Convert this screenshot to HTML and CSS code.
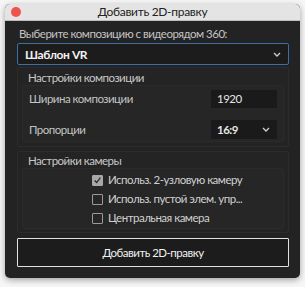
FILE: index.html
```html
<!DOCTYPE html>
<html lang="ru">
<head>
<meta charset="utf-8">
<link rel="stylesheet" href="styles.css">
</head>
<body>
<div class="window">
  <div class="titlebar">
    <span class="close"></span>
    <span class="title">Добавить 2D-правку</span>
  </div>
  <div class="content">
    <div class="label">Выберите композицию с видеорядом 360:</div>
    <div class="select main">
      <span>Шаблон VR</span>
      <svg class="chev" width="8" height="5" viewBox="0 0 8 5"><path d="M1 1 L4 4 L7 1" fill="none" stroke="#cfcfcf" stroke-width="1.3"/></svg>
    </div>
    <div class="group g1">
      <div class="glabel">Настройки композиции</div>
      <div class="panel">
        <div class="row">
          <span>Ширина композиции</span>
          <div class="field">1920</div>
        </div>
        <div class="row">
          <span>Пропорции</span>
          <div class="field sel"><span>16:9</span>
            <svg class="chev" width="8" height="5" viewBox="0 0 8 5"><path d="M1 1 L4 4 L7 1" fill="none" stroke="#cfcfcf" stroke-width="1.3"/></svg>
          </div>
        </div>
      </div>
    </div>
    <div class="group g2">
      <div class="glabel">Настройки камеры</div>
      <div class="panel checks">
        <div class="check"><span class="box on"><svg width="11" height="11" viewBox="0 0 11 11"><path d="M2 5.5 L4.5 8 L9 2" fill="none" stroke="#2a2a2a" stroke-width="1.6"/></svg></span>Использ. 2-узловую камеру</div>
        <div class="check"><span class="box"></span>Использ. пустой элем. упр...</div>
        <div class="check"><span class="box"></span>Центральная камера</div>
      </div>
    </div>
    <div class="button">Добавить 2D-правку</div>
  </div>
</div>
</body>
</html>
```

FILE: styles.css
```css
html, body {
  margin: 0;
  padding: 0;
  background: #f6f6f6;
  width: 305px;
  height: 287px;
  overflow: hidden;
  font-family: "Lato", "Open Sans", sans-serif;
}
.window {
  margin: 4px 5px 0 5px;
  width: 295px;
  height: 274px;
  border-radius: 5px;
  overflow: hidden;
  background: #232323;
  box-shadow: 0 2px 6px rgba(0,0,0,0.35);
  display: flex;
  flex-direction: column;
}
.titlebar {
  height: 16px;
  flex: none;
  background: #e4e4e4;
  display: flex;
  align-items: center;
  justify-content: center;
  position: relative;
  border-bottom: 1px solid #bdbdbd;
}
.close {
  position: absolute;
  left: 6px;
  top: 3px;
  width: 10px;
  height: 10px;
  border-radius: 50%;
  background: #f0524f;
}
.title {
  font-size: 12px;
  letter-spacing: -0.3px;
  color: #222;
  line-height: 16px;
}
.content {
  padding: 6px 11px 0 12px;
  display: flex;
  flex-direction: column;
  color: #c4c4c4;
  font-size: 11.5px;
  letter-spacing: -0.5px;
}
.label {
  height: 14px;
  line-height: 14px;
  padding-left: 2px;
}
.select.main {
  margin-top: 2px;
  height: 20px;
  border: 1px solid #3d6ea6;
  border-radius: 2px;
  background: #1c1c1c;
  display: flex;
  align-items: center;
  justify-content: space-between;
  padding: 0 7px 0 7px;
  color: #f2f2f2;
  font-weight: 700;
  font-size: 12px;
  letter-spacing: -0.4px;
}
.group {
  border: 1px solid #2c2c2c;
  border-radius: 2px;
  background: #242424;
}
.g1 {
  margin-top: 2px;
  padding: 3px 4px 4px 4px;
}
.g2 {
  margin-top: 4px;
  padding: 2px 4px 3px 4px;
}
.glabel {
  height: 14px;
  line-height: 14px;
  padding-left: 6px;
  color: #c8c8c8;
}
.panel {
  border: 1px solid #2b2b2b;
  border-radius: 2px;
  background: #262626;
}
.g1 .panel {
  padding: 3px 6px 2px 6px;
  display: flex;
  flex-direction: column;
  gap: 12px;
}
.row {
  display: flex;
  justify-content: space-between;
  align-items: center;
  height: 19px;
}
.field {
  width: 66px;
  height: 18px;
  background: #1a1a1a;
  color: #e6e6e6;
  font-size: 11.5px;
  line-height: 18px;
  padding: 0 0 0 6px;
  box-sizing: border-box;
}
.field.sel {
  height: 19px;
  display: flex;
  align-items: center;
  justify-content: space-between;
  padding-right: 7px;
  font-weight: 700;
}
.checks {
  padding: 4px 0 3px 69px;
  display: flex;
  flex-direction: column;
  gap: 5px;
}
.check {
  display: flex;
  align-items: center;
  gap: 5px;
  height: 14px;
  line-height: 14px;
  color: #d0d0d0;
}
.box {
  width: 11px;
  height: 11px;
  border: 1px solid #9a9a9a;
  border-radius: 1px;
  box-sizing: border-box;
  display: flex;
  align-items: center;
  justify-content: center;
}
.box.on {
  background: #a8a8a8;
  border-color: #a8a8a8;
}
.box svg { display: block; }
.button {
  margin-top: 5px;
  height: 29px;
  border: 1.5px solid #e2e2e2;
  border-radius: 1px;
  background: #1c1c1c;
  box-sizing: border-box;
  display: flex;
  align-items: center;
  justify-content: center;
  color: #f0f0f0;
  font-size: 11.5px;
}
```
